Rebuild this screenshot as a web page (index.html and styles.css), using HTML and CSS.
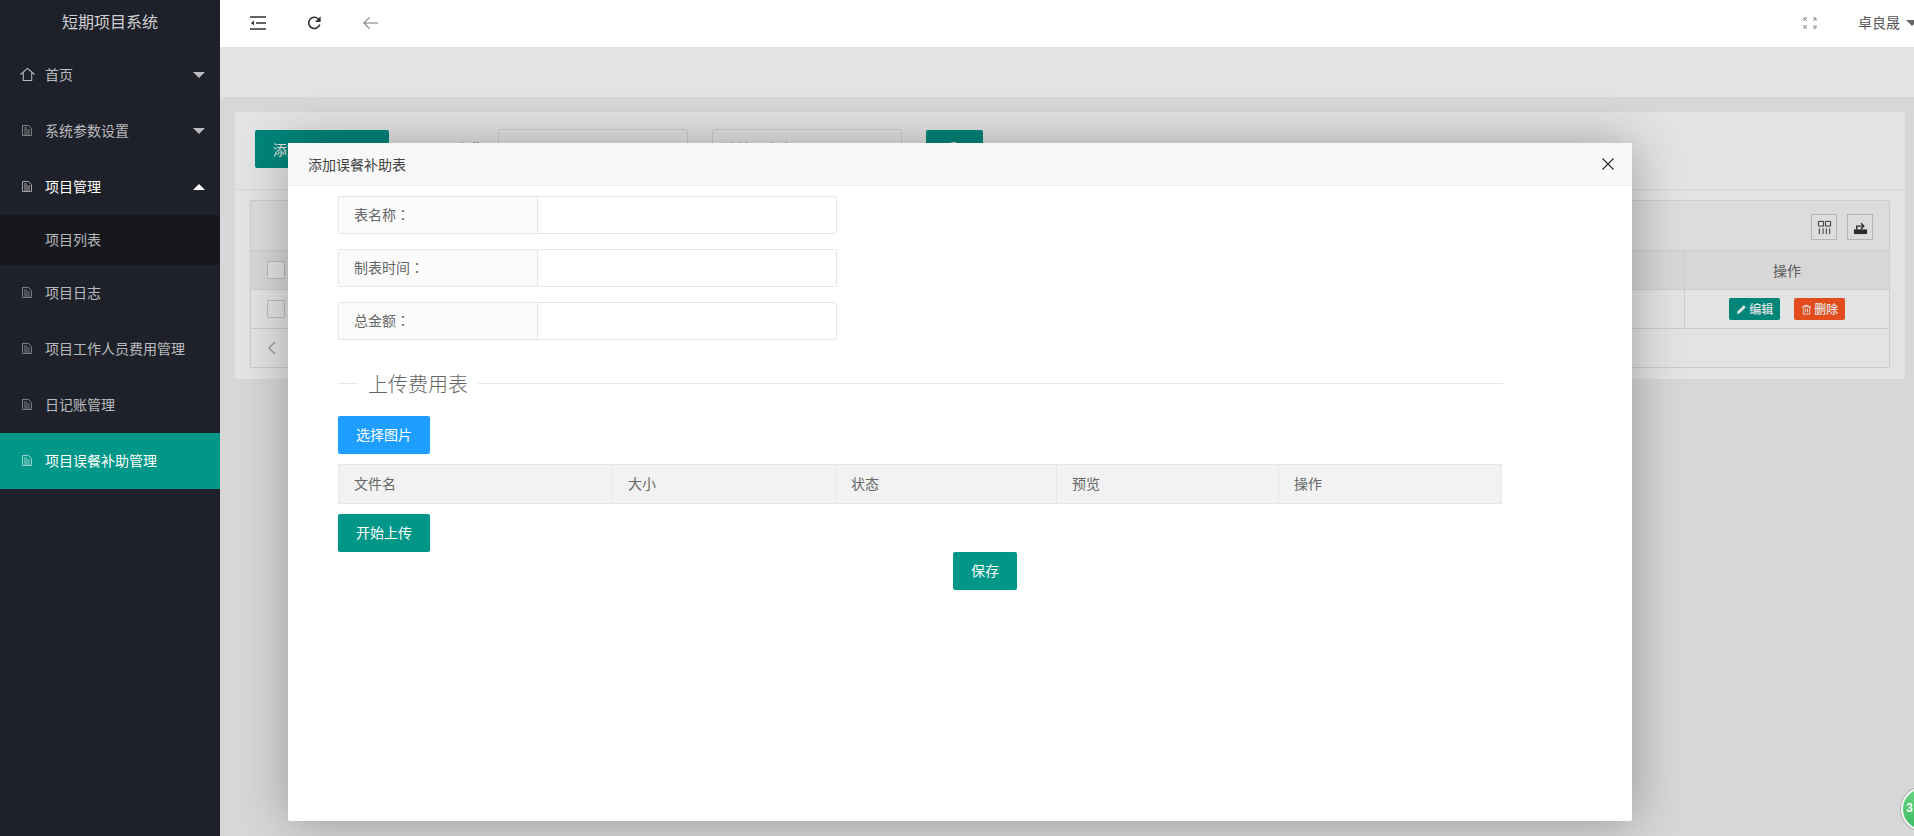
FILE: index.html
```html
<!DOCTYPE html>
<html lang="zh-CN">
<head>
<meta charset="utf-8">
<title>短期项目系统</title>
<link rel="stylesheet" href="styles.css">
</head>
<body>
<svg class="defs" aria-hidden="true"><symbol id="file" viewBox="0 0 10 11"><path d="M.5.5h6l3 3v7H.5z" fill="none" stroke="currentColor"/><path d="M2 3h3M2 5h6M2 7h6M2 9h6" stroke="currentColor"/></symbol></svg>
<div class="app">
  <aside class="side">
    <div class="logo">短期项目系统</div>
    <nav class="menu">
      <a class="item"><svg class="ico-home" viewBox="0 0 16 16"><path d="M.5 8 8 1.500 15.500 8M3.500 6v8.500h9V6" fill="none" stroke="currentColor" stroke-width="1.100"/></svg><span>首页</span><i class="tri"></i></a>
      <a class="item"><svg class="ico"><use href="#file"/></svg><span>系统参数设置</span><i class="tri"></i></a>
      <a class="item open"><svg class="ico"><use href="#file"/></svg><span>项目管理</span><i class="tri up"></i></a>
      <a class="sub">项目列表</a>
      <a class="item"><svg class="ico"><use href="#file"/></svg><span>项目日志</span></a>
      <a class="item"><svg class="ico"><use href="#file"/></svg><span>项目工作人员费用管理</span></a>
      <a class="item"><svg class="ico"><use href="#file"/></svg><span>日记账管理</span></a>
      <a class="item active"><svg class="ico"><use href="#file"/></svg><span>项目误餐补助管理</span></a>
    </nav>
  </aside>
  <div class="main">
    <header class="top">
      <svg class="tool t1" viewBox="0 0 16 14"><path d="M0 1h16M6 7h10M0 13h16" stroke="#333" stroke-width="1.600" fill="none"/><path d="M4 4.500 1 7l3 2.500z" fill="#333"/></svg>
      <svg class="tool t2" viewBox="0 0 16 16"><path d="M13.600 9.500A6 6 0 1 1 12 3.500" stroke="#333" stroke-width="1.700" fill="none"/><path d="M14.500 .8v6h-6z" fill="#333"/></svg>
      <svg class="tool t3" viewBox="0 0 16 14"><path d="M7 1 1 7l6 6M1 7h15" stroke="#777" stroke-width="1.100" fill="none"/></svg>
      <div class="spacer"></div>
      <svg class="full" viewBox="0 0 14 12"><path d="M1 4V1h3M1 1l3 3M13 4V1h-3M13 1l-3 3M1 8v3h3M1 11l3-3M13 8v3h-3M13 11l-3-3" stroke="#888" stroke-width="1" fill="none"/></svg>
      <span class="user">卓良晟</span><i class="tri dark"></i>
    </header>
    <div class="stage">
      <div class="tabs"></div>
      <div class="content">
        <section class="card">
          <div class="bar">
            <button class="btn wide">添加误餐补助表</button>
            <label class="lab">项目名称</label>
            <div class="inp"></div>
            <div class="inp ph">请输入内容</div>
            <button class="btn search"><svg viewBox="0 0 16 16"><circle cx="7" cy="7" r="5" fill="none" stroke="#fff" stroke-width="2"/></svg></button>
          </div>
          <div class="grid">
            <div class="g-tools"><span class="g-ic"><svg viewBox="0 0 16 16"><path d="M1.500 1.500h5.500v5H1.500zM9 1.500h5.500v5H9zM2.500 9v6M6.500 9v6M10 9v6M13.500 9v6" fill="none" stroke="#333" stroke-width="1"/></svg></span><span class="g-ic"><svg viewBox="0 0 16 16"><path d="M1 10h14v5H1z" fill="#333"/><path d="M4 10V6.500h6M8.500 3.500 11.500 6.500 8.500 9.500" fill="none" stroke="#333" stroke-width="1.500"/></svg></span></div>
            <div class="g-row head"><div class="g-main"><i class="chk"></i></div><div class="g-op">操作</div></div>
            <div class="g-row"><div class="g-main"><i class="chk"></i></div><div class="g-op"><a class="mini teal"><svg viewBox="0 0 12 12"><path d="M1 11l.8-3L8.500 1.300l2.200 2.200L4 10.200z" fill="#fff"/></svg> 编辑</a><a class="mini red"><svg viewBox="0 0 12 12"><path d="M1 3h10M4 3V1.500h4V3M2.500 3v8h7V3M5 5v4M7 5v4" fill="none" stroke="#fff" stroke-width="1"/></svg> 删除</a></div></div>
            <div class="g-page"><svg viewBox="0 0 8 14"><path d="M7 1 1 7l6 6" fill="none" stroke="#aaa" stroke-width="1.300"/></svg></div>
          </div>
        </section>
      </div>
      <div class="shade"></div>
      <div class="modal">
        <div class="m-head"><span>添加误餐补助表</span><svg class="close" viewBox="0 0 12 12"><path d="M.5.500l11 11M11.500.500l-11 11" stroke="#2f2f3a" stroke-width="1.200"/></svg></div>
        <div class="m-body">
          <div class="row"><label>表名称<span class="colon">：</span></label><div class="field"></div></div>
          <div class="row"><label>制表时间<span class="colon">：</span></label><div class="field"></div></div>
          <div class="row"><label>总金额<span class="colon">：</span></label><div class="field"></div></div>
          <div class="legend"><span>上传费用表</span></div>
          <button class="btn blue">选择图片</button>
          <div class="files"><div class="c1">文件名</div><div class="c2">大小</div><div class="c3">状态</div><div class="c4">预览</div><div class="c5">操作</div></div>
          <button class="btn">开始上传</button>
          <div class="save"><button class="btn">保存</button></div>
        </div>
      </div>
    </div>
  </div>
</div>
<div class="bubble">3</div>
</body>
</html>
```
FILE: styles.css
```css
* { box-sizing: border-box; }
html, body { margin: 0; height: 100%; overflow: hidden; }
body { font: 14px/1.5 "Noto Sans CJK SC", "Noto Sans", sans-serif; color: #666; background: #f2f2f2; }
.defs { display: none; }
button { font: inherit; border: 0; }
.app { display: flex; height: 836px; }

.side { width: 220px; flex: none; background: #1e2129; color: rgba(255,255,255,.7); }
.logo { height: 47px; padding-bottom: 5px; display: flex; align-items: center; justify-content: center; font-size: 16px; color: rgba(255,255,255,.8); }
.item { display: flex; align-items: center; height: 56px; padding: 0 0 2px 22px; position: relative; }
.item.open { color: #fff; }
.item.active { background: #009688; color: #fff; }
.ico { width: 10px; height: 11px; margin-right: 13px; opacity: .6; flex: none; }
.ico-home { width: 15px; height: 15px; margin: 0 10px 0 -2px; flex: none; }
.sub { display: flex; align-items: center; height: 50px; padding: 0 0 2px 45px; background: #16181d; border-radius: 2px; }
.tri { position: absolute; right: 15px; top: 25px; width: 0; height: 0; border: 6px solid transparent; border-top: 6px solid rgba(255,255,255,.7); border-bottom: 0; }
.tri.up { border-top: 0; border-bottom: 6px solid #fff; }
.tri.dark { position: static; margin: 0 -4px 0 6px; border-top-color: #666; }

.main { flex: 1; min-width: 0; display: flex; flex-direction: column; }
.top { height: 47px; flex: none; background: #fff; display: flex; align-items: center; padding: 0 0 1px 30px; }
.tool { height: 14px; width: 16px; flex: none; margin-right: 41px; }
.t2 { height: 16px; width: 15px; }
.t3 { width: 15px; }
.spacer { flex: 1; }
.full { width: 14px; height: 12px; margin-right: 41px; }
.user { font-size: 14px; color: #555; margin-top: -2px; }

.stage { flex: 1; position: relative; overflow: hidden; }
.tabs { height: 50px; background: #fff; }
.content { padding: 15px 9px 0 15px; }
.card { height: 267px; background: #fff; border-radius: 2px; padding: 0 15px; }
.bar { height: 78px; margin: 0 -15px; padding: 18px 0 0 20px; display: flex; align-items: flex-start; border-bottom: 1px solid #f0f0f0; }
.btn { display: inline-block; height: 38px; padding: 0 18px 2px; background: #009688; color: #fff; border-radius: 2px; }
.btn.wide { width: 134px; padding-bottom: 0; }
.lab { width: 56px; margin: 8px 14px 0 39px; }
.inp { width: 190px; height: 39px; margin: -1px 24px 0 0; padding: 8px 10px; border: 1px solid #e6e6e6; border-radius: 2px; color: #999; background: #fff; }
.btn.search { width: 57px; padding: 0 20px; display: block; }
.search svg { width: 17px; height: 17px; display: block; }
.grid { margin-top: 10px; border: 1px solid #e6e6e6; height: 168px; width: 1640px; }
.g-tools { height: 50px; background: #f8f8f8; border-bottom: 1px solid #e6e6e6; display: flex; justify-content: flex-end; gap: 10px; padding: 13px 16px 0 0; }
.g-ic { width: 26px; height: 26px; border: 1px solid #ccc; display: flex; align-items: center; justify-content: center; }
.g-ic svg { width: 15px; height: 15px; }
.g-row { height: 39px; display: flex; border-bottom: 1px solid #e6e6e6; }
.g-row.head { background: #f2f2f2; }
.g-main { flex: 1; padding: 10px 0 0 16px; }
.chk { display: block; width: 18px; height: 18px; border: 1px solid #d2d2d2; border-radius: 2px; background: #fff; }
.g-op { width: 205px; border-left: 1px solid #e6e6e6; display: flex; align-items: center; justify-content: center; gap: 14px; }
.mini { display: inline-flex; align-items: center; justify-content: center; width: 51px; height: 22px; font-size: 12px; font-weight: 500; color: #fff; border-radius: 2px; white-space: pre; }
.mini svg { width: 11px; height: 11px; }
.teal { background: #009688; }
.red { background: #ff5722; }
.g-page { height: 39px; padding: 12px 0 0 17px; }
.g-page svg { width: 8px; height: 14px; display: block; }

.shade { position: absolute; inset: 0; background: rgba(0,0,0,.11); }
.modal { position: absolute; left: 68px; top: 96px; width: 1344px; height: 678px; background: #fff; box-shadow: 1px 1px 50px rgba(0,0,0,.3); border-radius: 2px; }
.m-head { height: 43px; padding: 0 20px; background: #f8f8f8; border-bottom: 1px solid #eee; display: flex; align-items: center; justify-content: space-between; color: #444; font-size: 14px; }
.close { width: 12px; height: 12px; margin-right: -2px; }
.m-body { padding: 10px 0 0 50px; }
.row { display: flex; width: 499px; height: 38px; margin-bottom: 15px; border: 1px solid #e6e6e6; border-radius: 2px; }
.row label { width: 199px; padding: 0 15px 2px; display: flex; align-items: center; background: #fbfbfb; border-right: 1px solid #e6e6e6; }
.colon { font-family: "Noto Sans CJK TC", sans-serif; }
.field { flex: 1; }
.legend { display: flex; align-items: center; width: 1165px; height: 30px; margin: 28px 0 18px; font-size: 20px; font-weight: 300; color: #666; }
.legend::before { content: ""; width: 20px; height: 1px; background: #e6e6e6; }
.legend::after { content: ""; flex: 1; height: 1px; background: #e6e6e6; }
.legend span { padding: 2px 10px 0; }
.btn.blue { display: block; background: #1e9fff; }
.files { display: grid; grid-template-columns: 273px 223px 221px 222px 223px; width: 1164px; height: 40px; margin: 10px 0; border: 1px solid #e6e6e6; background: #f2f2f2; }
.files div { display: flex; align-items: center; padding: 0 0 2px 15px; border-left: 1px solid #e6e6e6; }
.files .c1 { border-left: 0; }
.save { text-align: center; }
.save .btn { display: inline-block; vertical-align: top; }

.bubble { position: fixed; left: 1901px; top: 787px; width: 44px; height: 44px; border-radius: 50%; border: 2px solid #f4f4f4; box-shadow: 0 0 0 1px #aaa; background: linear-gradient(#66d482, #3dbb62); color: #fff; font: 700 12px/40px "Liberation Mono", monospace; padding-left: 3px; }
```
